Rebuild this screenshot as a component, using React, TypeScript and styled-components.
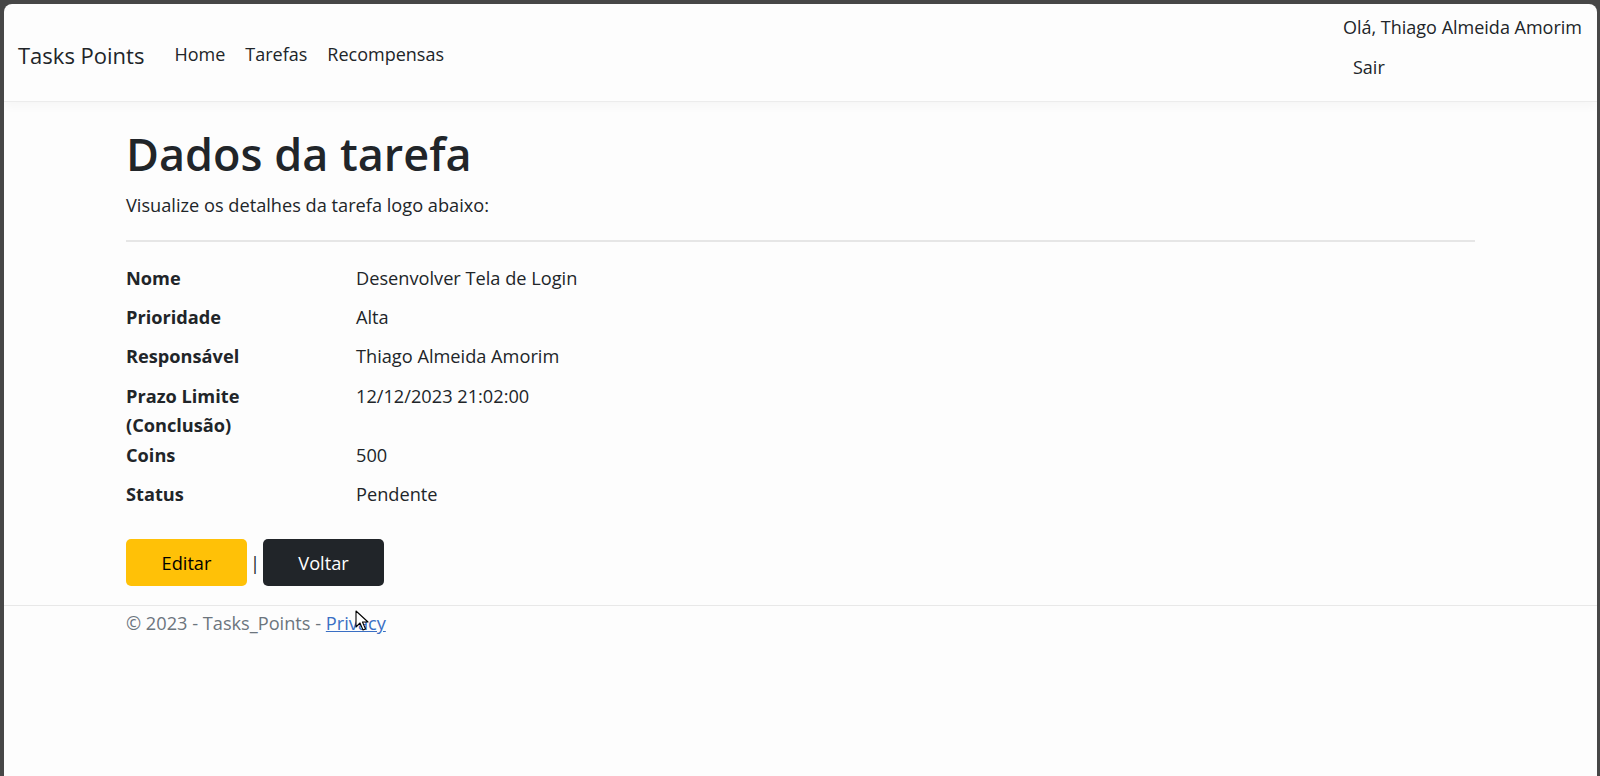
import React from "react";
import styled, { createGlobalStyle } from "styled-components";

const GlobalStyle = createGlobalStyle`
  html, body {
    margin: 0;
    padding: 0;
    height: 100%;
  }
  body {
    background: #474747;
    font-family: "Open Sans", "Noto Sans", "Liberation Sans", sans-serif;
    color: #212529;
  }
  #root {
    height: 100%;
  }
  * {
    box-sizing: border-box;
  }
`;

const Frame = styled.div`
  height: 776px;
  padding: 4px 3px 0 4px;
  background: #474747;
`;

const Window = styled.div`
  position: relative;
  height: 100%;
  background: #fdfdfd;
  border-radius: 8px 8px 0 0;
  overflow: hidden;
  display: flex;
  flex-direction: column;
`;

const NavBar = styled.header`
  height: 98px;
  flex: none;
  display: flex;
  justify-content: space-between;
  align-items: stretch;
  padding: 0 15px 0 14px;
  border-bottom: 1px solid #ececec;
  box-shadow: 0 4px 10px rgba(0, 0, 0, 0.03);
`;

const LeftNav = styled.nav`
  display: flex;
  align-items: center;
  padding-top: 4px;
`;

const Brand = styled.a`
  font-size: 22px;
  line-height: 30px;
  color: #212529;
  text-decoration: none;
  margin-right: 20px;
`;

const NavLink = styled.a`
  font-size: 18px;
  line-height: 29.5px;
  color: #212529;
  text-decoration: none;
  padding: 0 10px;
`;

const RightNav = styled.div`
  display: flex;
  flex-direction: column;
  align-items: flex-start;
  gap: 10px;
  padding-top: 9px;
`;

const UserLink = styled.a`
  font-size: 18px;
  line-height: 29.5px;
  color: #212529;
  text-decoration: none;
`;

const LogoutButton = styled.button<{ $indent: number }>`
  font-family: inherit;
  font-size: 18px;
  line-height: 29.5px;
  color: #212529;
  background: none;
  border: none;
  padding: 0;
  margin-left: ${(p) => p.$indent}px;
  cursor: pointer;
`;

const Main = styled.main`
  width: 1349px;
  margin: 0 auto;
  padding-top: 22px;
`;

const Title = styled.h1`
  font-size: 45px;
  line-height: 59px;
  font-weight: 600;
  margin: 0 0 8px;
  color: #212529;
`;

const Lead = styled.p`
  font-size: 18.2px;
  line-height: 29.5px;
  margin: 0;
  color: #212529;
`;

const Divider = styled.hr`
  border: none;
  border-top: 2px solid #e6e6e6;
  margin: 19px 0 22px;
`;

const Details = styled.dl`
  display: grid;
  grid-template-columns: 230px 1fr;
  margin: 0 0 20px;
  font-size: 18.2px;
  line-height: 29.5px;
`;

const Term = styled.dt`
  font-weight: 700;
  margin: 0;
  padding-right: 40px;
`;

const Value = styled.dd`
  margin: 0 0 9.9px;
`;

const Actions = styled.div`
  display: flex;
  align-items: center;
  font-size: 18.2px;
`;

const Button = styled.a<{ $variant: "warning" | "dark" }>`
  display: inline-flex;
  align-items: center;
  justify-content: center;
  width: 121px;
  height: 47px;
  border-radius: 5px;
  font-size: 18.2px;
  text-decoration: none;
  background: ${(p) => (p.$variant === "warning" ? "#ffc107" : "#212529")};
  color: ${(p) => (p.$variant === "warning" ? "#000" : "#fff")};
`;

const Separator = styled.span`
  padding: 0 3px;
  color: #212529;
`;

const Footer = styled.footer`
  margin-top: 19px;
  border-top: 1px solid #e8e8e8;
  padding-top: 3px;
`;

const FooterInner = styled.div`
  width: 1349px;
  margin: 0 auto;
  font-size: 18.2px;
  line-height: 29.5px;
  color: #6c757d;
`;

const FooterLink = styled.a`
  color: #3a6fc4;
  text-decoration: underline;
`;

const Cursor = styled.svg`
  position: absolute;
  left: 351px;
  top: 606px;
  pointer-events: none;
`;

const rows: [string, string][] = [
  ["Nome", "Desenvolver Tela de Login"],
  ["Prioridade", "Alta"],
  ["Responsável", "Thiago Almeida Amorim"],
  ["Prazo Limite (Conclusão)", "12/12/2023 21:02:00"],
  ["Coins", "500"],
  ["Status", "Pendente"],
];

export default function App() {
  return (
    <>
      <GlobalStyle />
      <Frame>
        <Window>
          <NavBar>
            <LeftNav>
              <Brand href="#">Tasks Points</Brand>
              <NavLink href="#">Home</NavLink>
              <NavLink href="#">Tarefas</NavLink>
              <NavLink href="#">Recompensas</NavLink>
            </LeftNav>
            <RightNav>
              <UserLink href="#">Olá, Thiago Almeida Amorim</UserLink>
              <LogoutButton $indent={10}>Sair</LogoutButton>
            </RightNav>
          </NavBar>
          <Main>
            <Title>Dados da tarefa</Title>
            <Lead>Visualize os detalhes da tarefa logo abaixo:</Lead>
            <Divider />
            <Details>
              {rows.map(([k, v]) => (
                <React.Fragment key={k}>
                  <Term>{k}</Term>
                  <Value>{v}</Value>
                </React.Fragment>
              ))}
            </Details>
            <Actions>
              <Button href="#" $variant="warning">Editar</Button>
              <Separator>|</Separator>
              <Button href="#" $variant="dark">Voltar</Button>
            </Actions>
          </Main>
          <Footer>
            <FooterInner>
              © 2023 - Tasks_Points - <FooterLink href="#">Privacy</FooterLink>
            </FooterInner>
          </Footer>
          <Cursor width="14" height="22" viewBox="0 0 14 22">
            <path d="M1 1 L1 17 L5 13 L8 20 L10.5 19 L7.5 12 L13 12 Z" fill="#fff" stroke="#000" strokeWidth="1.1" strokeLinejoin="round" />
          </Cursor>
        </Window>
      </Frame>
    </>
  );
}
